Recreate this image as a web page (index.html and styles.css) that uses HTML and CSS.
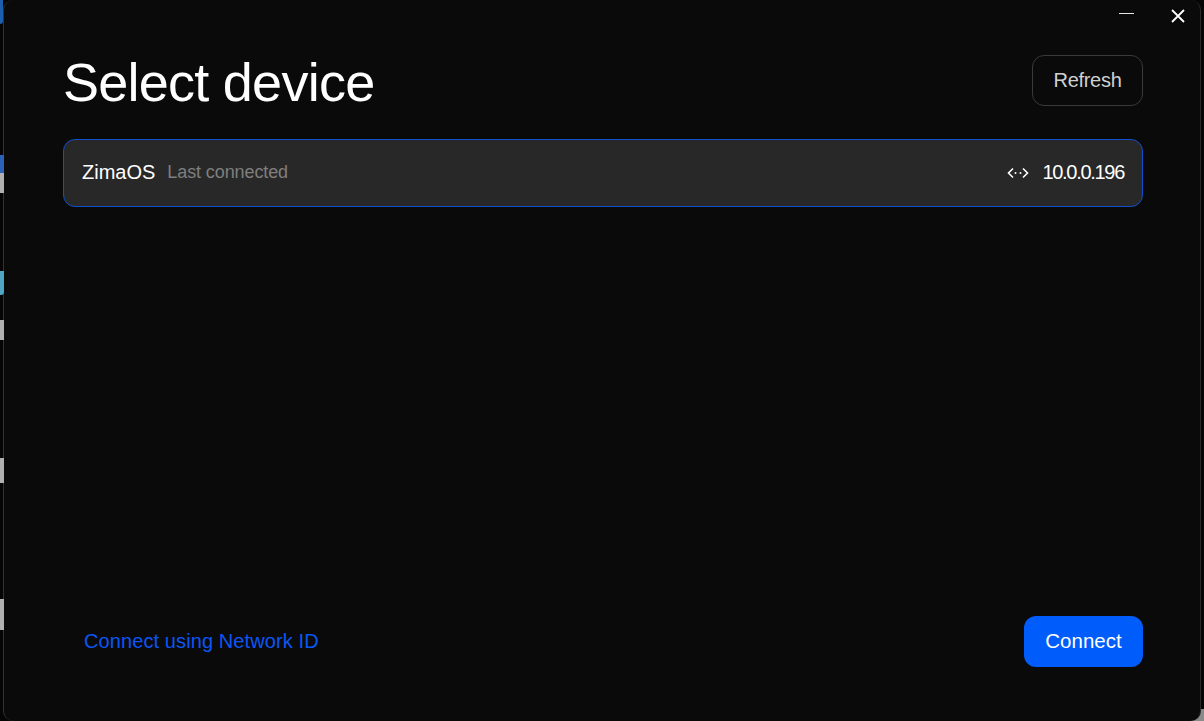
FILE: index.html
```html
<!DOCTYPE html>
<html lang="en">
<head>
    <meta charset="UTF-8">
    <meta name="viewport" content="width=device-width, initial-scale=1.0">
    <title>Select device</title>
    <link rel="stylesheet" href="styles.css">
</head>
<body>
    <!-- bits of the desktop showing behind the window -->
    <div class="peek peek-top"></div>
    <div class="peek peek-blue"></div>
    <div class="peek peek-grey1"></div>
    <div class="peek peek-teal"></div>
    <div class="peek peek-grey2"></div>
    <div class="peek peek-grey3"></div>
    <div class="peek peek-grey4"></div>
    <div class="peek-corner"></div>

    <div class="window">
        <div class="winbar">
            <span class="min"></span>
            <svg class="close" width="16" height="16" viewBox="0 0 16 16">
                <path d="M2 2L14 14M14 2L2 14" stroke="#fff" stroke-width="1.8" fill="none"/>
            </svg>
        </div>
        <div class="head">
            <h1>Select device</h1>
            <div class="refresh">Refresh</div>
        </div>
        <div class="device">
            <span class="name">ZimaOS</span>
            <span class="last">Last connected</span>
            <svg class="lan" width="22" height="12" viewBox="0 0 22 12">
                <path d="M6 1.5L1.5 6L6 10.5M16 1.5L20.5 6L16 10.5" stroke="#fff" stroke-width="1.6" fill="none"/>
                <circle cx="8.5" cy="6" r="1" fill="#fff"/>
                <circle cx="13.5" cy="6" r="1" fill="#fff"/>
            </svg>
            <span class="ip">10.0.0.196</span>
        </div>
        <div class="foot">
            <div class="network">Connect using Network ID</div>
            <div class="connect">Connect</div>
        </div>
    </div>
</body>
</html>
```

FILE: styles.css
```css
html,body{
    margin: 0;
    padding: 0;
    height: 100%;
}
body{
    background: #050505;
    font-family: "Liberation Sans", Arial, sans-serif;
    overflow: hidden;
}
.peek{
    position: absolute;
    left: 0;
    width: 4px;
    z-index: 2;
}
.peek-top{
    top: 0;
    width: 3px;
    height: 24px;
    background: #1c5fae;
    border-radius: 0 0 3px 0;
}
.peek-blue{
    top: 155px;
    height: 18px;
    background: #2b62b8;
}
.peek-grey1{
    top: 173px;
    height: 20px;
    background: #b0b0b0;
}
.peek-teal{
    top: 271px;
    height: 24px;
    background: #4fa6c4;
    border-radius: 0 0 3px 0;
}
.peek-grey2{
    top: 320px;
    height: 20px;
    background: #b0b0b0;
}
.peek-grey3{
    top: 458px;
    height: 25px;
    background: #b0b0b0;
}
.peek-grey4{
    top: 599px;
    height: 31px;
    background: #b0b0b0;
}
.peek-corner{
    position: absolute;
    right: 0;
    bottom: 0;
    width: 14px;
    height: 12px;
    background: #8a8a8a;
}
.window{
    position: relative;
    z-index: 1;
    box-sizing: border-box;
    margin-left: 3px;
    width: 1198px;
    height: 721px;
    background: #0a0a0b;
    border-left: 1px solid #333;
    border-right: 1px solid #2a2a2a;
    border-radius: 10px;
    padding: 0 57px 54px 59px;
    display: flex;
    flex-direction: column;
}
.winbar{
    position: absolute;
    top: 0;
    right: 0;
}
.min{
    position: absolute;
    top: 13px;
    right: 66px;
    width: 15px;
    height: 1px;
    background: #e6e6e6;
}
.close{
    position: absolute;
    top: 8px;
    right: 14px;
}
.head{
    display: flex;
    justify-content: space-between;
    align-items: flex-start;
    padding-top: 55px;
    height: 84px;
}
h1{
    margin: 0;
    font-size: 54px;
    font-weight: 400;
    line-height: 54px;
    color: #fff;
    letter-spacing: -0.75px;
}
.refresh{
    box-sizing: border-box;
    width: 111px;
    height: 51px;
    border: 1px solid #3a3a3a;
    border-radius: 12px;
    color: #d0d0d0;
    font-size: 20px;
    line-height: 49px;
    text-align: center;
    letter-spacing: -0.3px;
}
.device{
    box-sizing: border-box;
    height: 68px;
    background: #282828;
    border: 1px solid #0f50cc;
    border-radius: 12px;
    padding: 0 18px 2px;
    display: flex;
    align-items: center;
}
.name{
    color: #fff;
    font-size: 20px;
}
.last{
    color: #7f7f7f;
    font-size: 18px;
    margin-left: 12px;
    letter-spacing: -0.1px;
}
.lan{
    margin-left: auto;
    margin-top: 2px;
}
.ip{
    color: #fff;
    font-size: 20px;
    margin-left: 13px;
    letter-spacing: -1.3px;
}
.foot{
    margin-top: auto;
    display: flex;
    justify-content: space-between;
    align-items: center;
}
.network{
    color: #0a56f5;
    font-size: 20px;
    margin-left: 21px;
    letter-spacing: 0.1px;
}
.connect{
    width: 119px;
    height: 51px;
    background: #005cfa;
    border-radius: 12px;
    color: #fff;
    font-size: 20.5px;
    line-height: 50px;
    text-align: center;
}
```
